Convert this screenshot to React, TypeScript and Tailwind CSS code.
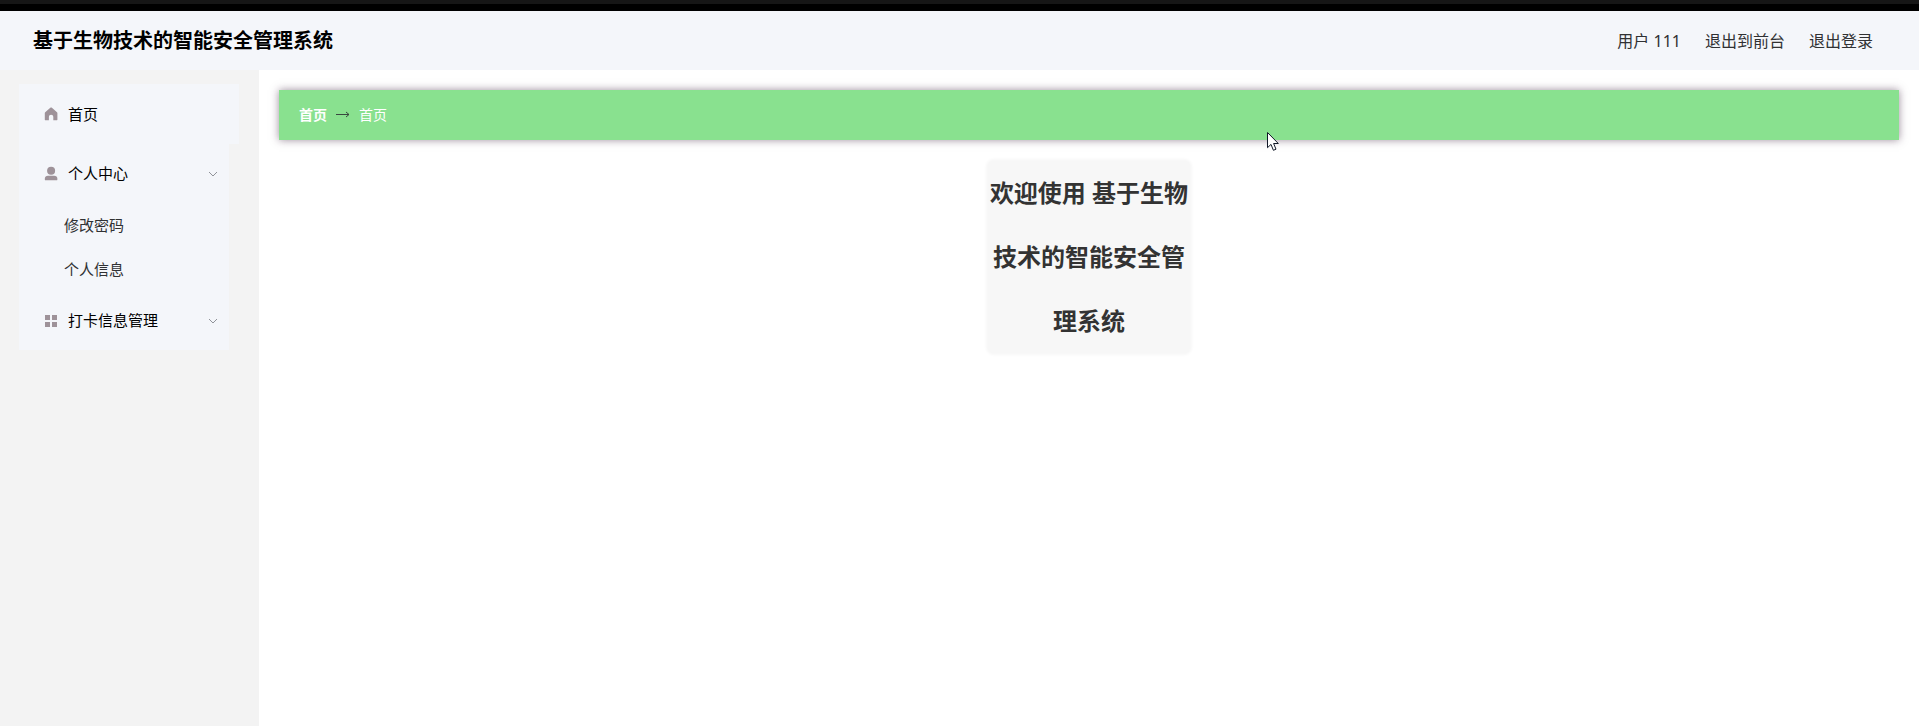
import { useState } from "react";

interface SubmenuProps {
  icon: React.ReactNode;
  title: string;
  items: string[];
  defaultOpen?: boolean;
}

function HomeIcon() {
  return (
    <svg className="size-4" viewBox="0 0 16 16" fill="#9e9299" aria-hidden="true">
      <path d="M8.9 1.7 14 6.3c.3.2.4.5.4.9v6.6c0 .2-.2.4-.4.4h-3.7v-3.3c0-1.2-1-2.1-2.2-2.1s-2.2.9-2.2 2.1v3.3H2.2c-.2 0-.4-.2-.4-.4V7.2c0-.4.1-.7.4-.9l5.1-4.6c.4-.4 1.2-.4 1.6 0Z" />
    </svg>
  );
}

function UserIcon() {
  return (
    <svg className="size-4" viewBox="0 0 16 16" fill="#9e9299" aria-hidden="true">
      <circle cx="8.1" cy="4.7" r="4" />
      <path d="M5 9.7h6.2c1.9 0 3.2 1.2 3.2 3v.7c0 .6-.4.9-1 .9H2.8c-.6 0-1-.3-1-.9v-.7c0-1.8 1.3-3 3.2-3Z" />
    </svg>
  );
}

function GridIcon() {
  return (
    <svg className="size-4" viewBox="0 0 16 16" fill="#9e9299" aria-hidden="true">
      <path d="M2 2h5v5H2zM9 2h5v5H9zM2 9h5v5H2zM9 9h5v5H9z" />
    </svg>
  );
}

function ChevronIcon() {
  return (
    <svg className="size-3" viewBox="0 0 12 12" fill="none" stroke="#909399" aria-hidden="true">
      <path d="m2 4 4 4 4-4" />
    </svg>
  );
}

function Submenu({ icon, title, items, defaultOpen = false }: SubmenuProps) {
  const [open, setOpen] = useState(defaultOpen);

  return (
    <li className="bg-[#f4f6fa] mr-2.5">
      <button
        type="button"
        aria-expanded={open}
        onClick={() => setOpen(!open)}
        className="w-full h-[59px] pl-6 pr-2.5 flex items-center gap-[9px] cursor-pointer text-black"
      >
        {icon}
        <span>{title}</span>
        <span className="ml-auto">
          <ChevronIcon />
        </span>
      </button>
      {open && (
        <ul>
          {items.map((item) => (
            <li key={item}>
              <a href="#" className="h-11 pl-[45px] flex items-center text-[#303133]">
                {item}
              </a>
            </li>
          ))}
        </ul>
      )}
    </li>
  );
}

export default function App() {
  return (
    <div className="min-h-screen flex flex-col bg-white text-[#303133] font-['Noto_Sans','Noto_Sans_CJK_SC',sans-serif]">
      <div className="h-[11px] bg-black border-t-4 border-[#161616]" />

      <header className="h-[59px] pl-[33px] pr-[46px] flex items-center justify-between bg-[#f4f6fa]">
        <h1 className="text-xl font-bold text-black">基于生物技术的智能安全管理系统</h1>
        <nav className="flex items-center gap-6 text-base">
          <span>用户 111</span>
          <a href="#">退出到前台</a>
          <a href="#">退出登录</a>
        </nav>
      </header>

      <div className="flex-1 flex">
        <aside className="w-[259px] shrink-0 pl-[19px] pr-5 pt-3.5 bg-[#f3f3f3]">
          <ul className="text-[15px]">
            <li>
              <a href="#" className="h-15 pl-6 flex items-center gap-[9px] bg-[#f4f6fa] text-black">
                <HomeIcon />
                <span>首页</span>
              </a>
            </li>
            <Submenu icon={<UserIcon />} title="个人中心" items={["修改密码", "个人信息"]} defaultOpen />
            <Submenu icon={<GridIcon />} title="打卡信息管理" items={["打卡信息"]} />
          </ul>
        </aside>

        <main className="flex-1 p-5">
          <nav
            aria-label="breadcrumb"
            className="h-[50px] px-5 flex items-center gap-2 bg-[#89e18f] text-sm text-white shadow-[0_0_8px_rgba(60,30,60,0.5)]"
          >
            <a href="#" className="font-bold">首页</a>
            <svg className="w-4 h-3" viewBox="0 0 16 12" fill="none" stroke="#39483f" aria-hidden="true">
              <path d="M1 5.5h13M11 3l3 2.5L11 8" />
            </svg>
            <span>首页</span>
          </nav>

          {/* Welcome card */}
          <h2 className="w-1/8 min-w-[202px] mx-auto mt-[21px] rounded-md bg-[#f7f7f7] text-center text-2xl/16 font-bold text-[#333] shadow-[0_0_3px_2px_#f7f7f7]">
            欢迎使用 基于生物技术的智能安全管理系统
          </h2>
        </main>
      </div>

      {/* Mouse pointer */}
      <svg
        className="absolute left-[1266px] top-[131px] w-[14px] h-[21px] pointer-events-none"
        viewBox="0 0 14 21"
        fill="#fff"
        stroke="#111827"
        aria-hidden="true"
      >
        <path d="M1.5 1.5v15.2l3.5-3.3 2.4 5.9 2.6-1.1-2.4-5.7h4.7Z" />
      </svg>
    </div>
  );
}
